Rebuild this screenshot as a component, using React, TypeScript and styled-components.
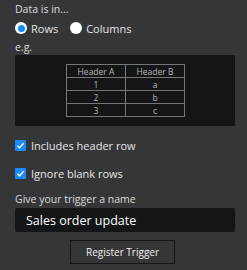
import React, { useState } from 'react'
import styled, { createGlobalStyle, css } from 'styled-components'

const GlobalStyle = createGlobalStyle`
  html, body {
    margin: 0;
    padding: 0;
    background: #353638;
  }
  body {
    font-family: "Open Sans", "DejaVu Sans", sans-serif;
  }
`

export default function App () {
  const [layout, setLayout] = useState<'rows' | 'columns'>('rows')
  const [headerRow, setHeaderRow] = useState(true)
  const [ignoreBlank, setIgnoreBlank] = useState(true)
  const [name, setName] = useState('Sales order update')

  return (
    <Panel>
      <GlobalStyle />
      <Label>Data is in...</Label>
      <RadioRow>
        <Option onClick={() => setLayout('rows')}>
          <Radio checked={layout === 'rows'} />
          Rows
        </Option>
        <Option onClick={() => setLayout('columns')}>
          <Radio checked={layout === 'columns'} />
          Columns
        </Option>
      </RadioRow>
      <Label>e.g.</Label>
      <Example>
        <Table>
          <thead>
            <tr><Cell as='th'>Header A</Cell><Cell as='th'>Header B</Cell></tr>
          </thead>
          <tbody>
            {[['1', 'a'], ['2', 'b'], ['3', 'c']].map(([n, l]) => (
              <tr key={n}><Cell>{n}</Cell><Cell>{l}</Cell></tr>
            ))}
          </tbody>
        </Table>
      </Example>
      <Check onClick={() => setHeaderRow(!headerRow)}>
        <Box checked={headerRow}><Tick /></Box>
        Includes header row
      </Check>
      <Check onClick={() => setIgnoreBlank(!ignoreBlank)}>
        <Box checked={ignoreBlank}><Tick /></Box>
        Ignore blank rows
      </Check>
      <NameLabel>Give your trigger a name</NameLabel>
      <Input value={name} onChange={e => setName(e.target.value)} />
      <Footer>
        <Button>Register Trigger</Button>
      </Footer>
    </Panel>
  )
}

function Tick () {
  return (
    <svg width='9' height='9' viewBox='0 0 9 9'>
      <path d='M1.5 4.8 L3.6 6.8 L7.6 2.2' fill='none' stroke='#fff' strokeWidth='1.4' />
    </svg>
  )
}

const Panel = styled.div`
  width: 247px;
  height: 270px;
  box-sizing: border-box;
  padding: 2px 12px 0 15px;
  display: flex;
  flex-direction: column;
  color: #e6e6e6;
  font-size: 10.5px;
`

const Label = styled.div`
  line-height: 15px;
  color: #dcdcdc;
`

const NameLabel = styled(Label)`
  margin-top: 13px;
`

const RadioRow = styled.div`
  display: flex;
  gap: 12px;
  margin: 4px 0 5px;
  height: 14px;
  align-items: center;
`

const Option = styled.label`
  display: flex;
  align-items: center;
  gap: 4px;
  cursor: pointer;
  font-size: 11px;
`

const Radio = styled.span<{ checked: boolean }>`
  width: 12px;
  height: 12px;
  border-radius: 50%;
  background: #fff;
  position: relative;
  ${({ checked }) => checked && css`
    &::after {
      content: '';
      position: absolute;
      left: 2.5px;
      top: 2.5px;
      width: 7px;
      height: 7px;
      border-radius: 50%;
      background: #0a8dff;
    }
  `}
`

const Example = styled.div`
  height: 71px;
  background: #141517;
  display: flex;
  justify-content: center;
  padding-top: 9px;
  box-sizing: border-box;
`

const Table = styled.table`
  border-collapse: collapse;
  height: 53px;
  align-self: flex-start;
  margin-left: 1px;
`

const Cell = styled.td`
  border: 1px solid #74777a;
  width: 58px;
  height: 12px;
  padding: 0;
  text-align: center;
  font-size: 8.5px;
  font-weight: normal;
  color: #b8b8b8;
  line-height: 11px;
`

const Check = styled.label`
  display: flex;
  align-items: center;
  gap: 5px;
  height: 12px;
  cursor: pointer;
  font-size: 11px;
  margin-top: 13px;
  & + & {
    margin-top: 16px;
  }
`

const Box = styled.span<{ checked: boolean }>`
  width: 11px;
  height: 11px;
  border-radius: 1px;
  display: flex;
  align-items: center;
  justify-content: center;
  background: ${({ checked }) => (checked ? '#1a8cff' : '#fff')};
  & svg {
    visibility: ${({ checked }) => (checked ? 'visible' : 'hidden')};
  }
`

const Input = styled.input`
  margin-top: 1px;
  height: 24px;
  box-sizing: border-box;
  background: #141517;
  border: none;
  border-radius: 2px;
  padding: 0 11px;
  color: #fff;
  font-family: inherit;
  font-size: 12.5px;
  outline: none;
  width: 220px;
`

const Footer = styled.div`
  display: flex;
  padding-left: 55px;
  margin-top: 8px;
`

const Button = styled.button`
  width: 105px;
  height: 24px;
  background: #353638;
  border: 1px solid #151515;
  color: #f0f0f0;
  font-family: inherit;
  font-size: 10px;
  cursor: pointer;
`
